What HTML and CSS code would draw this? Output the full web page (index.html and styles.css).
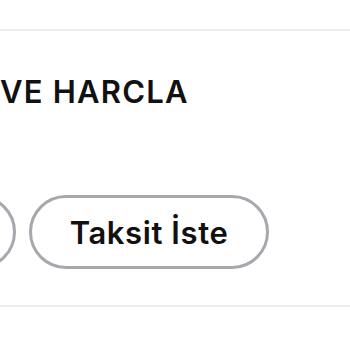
FILE: index.html
```html
<!DOCTYPE html>
<html lang="tr">
<head>
<meta charset="utf-8">
<link rel="stylesheet" href="styles.css">
</head>
<body>
<div class="page">
  <div class="divider top"></div>
  <section class="card">
    <h2 class="title">VE HARCLA</h2>
    <div class="actions">
      <button class="pill prev" type="button" aria-label="Öde"></button>
      <button class="pill" type="button">Taksit İste</button>
    </div>
  </section>
  <div class="divider bottom"></div>
</div>
</body>
</html>
```
FILE: styles.css
```css
html, body {
  margin: 0;
  padding: 0;
  background: #ffffff;
}
.page {
  width: 350px;
  height: 350px;
  overflow: hidden;
  padding-top: 29px;
  box-sizing: border-box;
  font-family: Inter, "Noto Sans", sans-serif;
  color: #111111;
}
.divider {
  height: 2px;
  background: #ececee;
  width: 100%;
}
.card {
  display: flex;
  flex-direction: column;
  padding-top: 43px;
  padding-bottom: 36px;
}
.title {
  margin: 0;
  font-size: 31px;
  line-height: 36px;
  font-weight: 600;
  letter-spacing: 1.2px;
  white-space: nowrap;
  padding-left: 0;
}
.actions {
  display: flex;
  gap: 13px;
  margin-top: 85px;
  margin-left: -187px;
}
.pill {
  flex: none;
  width: 240px;
  height: 74px;
  border: 3px solid #a7a7ae;
  border-radius: 37px;
  background: #ffffff;
  font-family: Inter, "Noto Sans", sans-serif;
  font-size: 31px;
  font-weight: 600;
  letter-spacing: 0.6px;
  color: #111111;
  padding: 0;
  box-sizing: border-box;
}
.pill.prev {
  width: 203px;
}
```
